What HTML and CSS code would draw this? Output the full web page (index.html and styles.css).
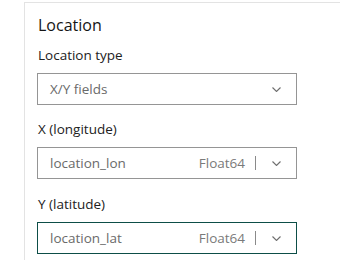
FILE: index.html
```html
<!DOCTYPE html>
<html>
<head>
<meta charset="utf-8">
<link rel="stylesheet" href="styles.css">
</head>
<body>
<div class="panel">
  <div class="title">Location</div>
  <div class="field">
    <div class="label">Location type</div>
    <div class="select">
      <span class="value">X/Y fields</span>
      <svg class="chev" width="9" height="5" viewBox="0 0 9 5"><path d="M0.5 0.5 L4.5 4.5 L8.5 0.5" fill="none" stroke="#6e6e6e" stroke-width="1.1"/></svg>
    </div>
  </div>
  <div class="field field-wide">
    <div class="label">X (longitude)</div>
    <div class="select">
      <span class="value">location_lon</span>
      <span class="type">Float64</span>
      <span class="sep"></span>
      <svg class="chev" width="9" height="5" viewBox="0 0 9 5"><path d="M0.5 0.5 L4.5 4.5 L8.5 0.5" fill="none" stroke="#6e6e6e" stroke-width="1.1"/></svg>
    </div>
  </div>
  <div class="field">
    <div class="label">Y (latitude)</div>
    <div class="select focused">
      <span class="value">location_lat</span>
      <span class="type">Float64</span>
      <span class="sep"></span>
      <svg class="chev" width="9" height="5" viewBox="0 0 9 5"><path d="M0.5 0.5 L4.5 4.5 L8.5 0.5" fill="none" stroke="#6e6e6e" stroke-width="1.1"/></svg>
    </div>
  </div>
</div>
</body>
</html>
```

FILE: styles.css
```css
html, body {
  margin: 0;
  padding: 0;
  background: #ffffff;
  overflow: hidden;
}
body {
  font-family: "Open Sans", "Noto Sans", sans-serif;
  color: #151515;
}
.panel {
  margin: 2px 0 0 24px;
  border-left: 1px solid #e3e3e3;
  border-top: 1px solid #e3e3e3;
  padding: 12px 0 0 12px;
  height: 258px;
  box-sizing: border-box;
}
.title {
  font-size: 16px;
  line-height: 20px;
  color: #151515;
  padding-left: 1px;
  margin-bottom: 10px;
}
.field {
  margin-bottom: 14px;
}
.field-wide {
  margin-bottom: 15px;
}
.label {
  font-size: 13.5px;
  line-height: 20px;
  color: #222222;
  padding-left: 1px;
  margin-bottom: 8px;
}
.select {
  box-sizing: border-box;
  width: 260px;
  height: 32px;
  border: 1px solid #959595;
  display: flex;
  align-items: center;
  padding: 0 15px 0 12px;
  font-size: 13.5px;
  color: #6a6a6a;
}
.select.focused {
  border-color: #0d4e47;
}
.value {
  flex: 1;
}
.type {
  color: #7a7a7a;
}
.sep {
  width: 1px;
  height: 14px;
  background: #8a8a8a;
  margin: 0 16px 0 10px;
}
.chev {
  display: block;
}
```
